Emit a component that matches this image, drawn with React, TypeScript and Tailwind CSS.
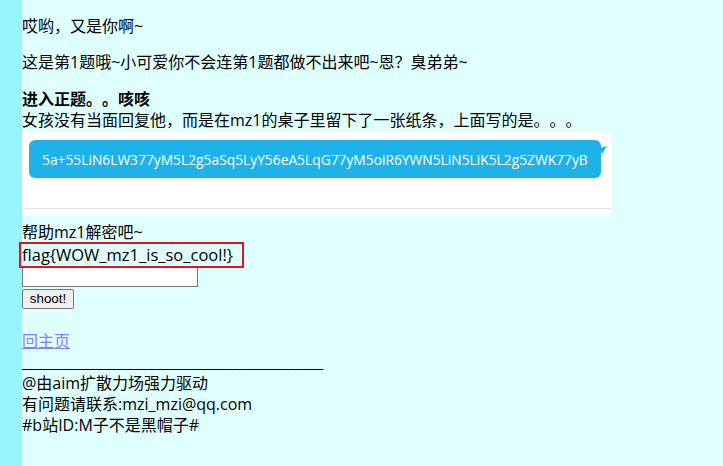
import React from "react";

export default function App() {
  const font = { fontFamily: '"Open Sans", "Noto Sans CJK SC", sans-serif' };
  return (
    <div className="flex h-[466px] w-full bg-[#e0ffff] [text-spacing-trim:space-all]" style={font}>
      <div className="w-[22px] shrink-0 bg-[#98f5ff]" />
      <div className="flex-1 text-[16px] leading-[21px] text-black">
        <p className="mt-[16px]">哎哟，又是你啊~</p>
        <p className="mt-[15px]">这是第1题哦~小可爱你不会连第1题都做不出来吧~恩？臭弟弟~</p>
        <p className="mt-[16px] font-bold">进入正题。。咳咳</p>
        <p>女孩没有当面回复他，而是在mz1的桌子里留下了一张纸条，上面写的是。。。</p>
        <div className="flex h-[85px] w-[589px] flex-col bg-white pt-[9px]">
          <div className="relative ml-[7px] flex h-[38px] w-[572px] items-center rounded-[6px] bg-[#1eb2e8] px-[13px]">
            <span className="whitespace-nowrap text-[13.8px] text-white">
              5a+55LiN6LW377yM5L2g5aSq5LyY56eA5LqG77yM5oiR6YWN5LiN5LiK5L2g5ZWK77yB
            </span>
            <svg className="absolute right-[-6px] top-[6px]" width="7" height="8" viewBox="0 0 7 8">
              <path d="M0 2 L7 0 L2 8 Z" fill="#1eb2e8" />
            </svg>
          </div>
          <div className="mt-[30px] h-px w-full bg-[#e6e6e6]" />
        </div>
        <p className="mt-[6px]">帮助mz1解密吧~</p>
        <div className="relative h-[23px] text-[16.5px] leading-[23px]">
          flag{"{"}WOW_mz1_is_so_cool!{"}"}
          <div className="absolute left-[-3px] top-[-1px] h-[26px] w-[225px] border-2 border-[#e81123]" />
        </div>
        <input
          type="text"
          className="block h-[21px] w-[176px] border border-[#767676] bg-white"
        />
        <button
          className="mt-[2px] block h-[20px] w-[52px] rounded-[2px] border border-[#767676] bg-[#efefef] text-[13.33px] leading-[16px]"
          style={{ fontFamily: '"Liberation Sans", Arial, sans-serif' }}
        >
          shoot!
        </button>
        <p className="mt-[22px]">
          <a href="#" className="text-[#8080ff] underline">回主页</a>
        </p>
        <p>___________________________________________</p>
        <p>@由aim扩散力场强力驱动</p>
        <p>有问题请联系:mzi_mzi@qq.com</p>
        <p>#b站ID:M子不是黑帽子#</p>
      </div>
    </div>
  );
}
